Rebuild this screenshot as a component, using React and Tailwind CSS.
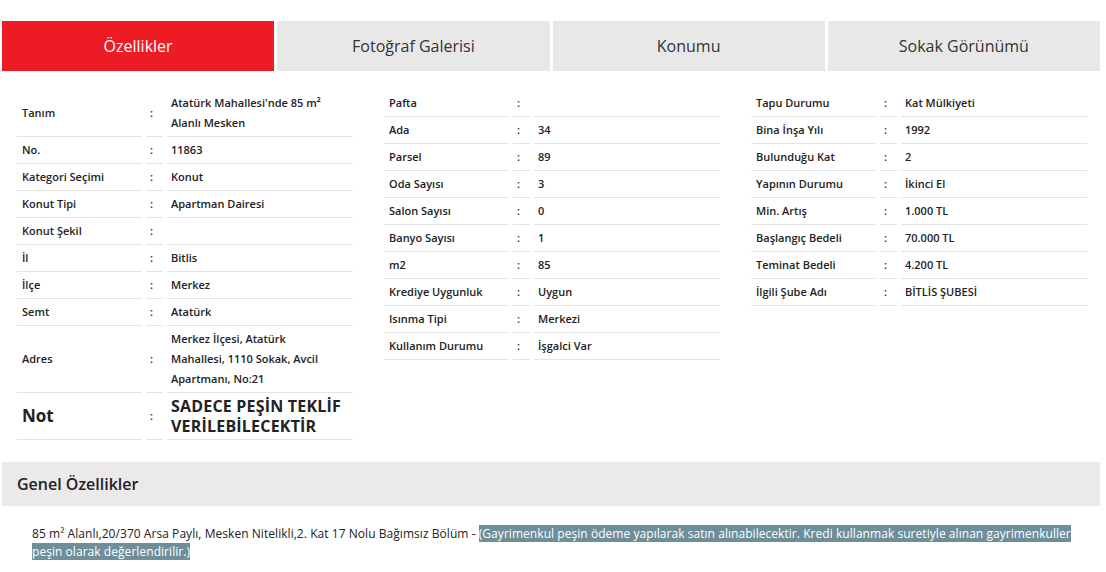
import React from "react";

const tabs = ["Özellikler", "Fotoğraf Galerisi", "Konumu", "Sokak Görünümü"];

const col1 = [
  { label: "Tanım", value: ["Atatürk Mahallesi'nde 85 m²", "Alanlı Mesken"] },
  { label: "No.", value: ["11863"] },
  { label: "Kategori Seçimi", value: ["Konut"] },
  { label: "Konut Tipi", value: ["Apartman Dairesi"] },
  { label: "Konut Şekil", value: [""] },
  { label: "İl", value: ["Bitlis"] },
  { label: "İlçe", value: ["Merkez"] },
  { label: "Semt", value: ["Atatürk"] },
  { label: "Adres", value: ["Merkez İlçesi, Atatürk", "Mahallesi, 1110 Sokak, Avcil", "Apartmanı, No:21"] },
  { label: "Not", value: ["SADECE PEŞİN TEKLİF", "VERİLEBİLECEKTİR"], big: true },
];

const col2 = [
  { label: "Pafta", value: [""] },
  { label: "Ada", value: ["34"] },
  { label: "Parsel", value: ["89"] },
  { label: "Oda Sayısı", value: ["3"] },
  { label: "Salon Sayısı", value: ["0"] },
  { label: "Banyo Sayısı", value: ["1"] },
  { label: "m2", value: ["85"] },
  { label: "Krediye Uygunluk", value: ["Uygun"] },
  { label: "Isınma Tipi", value: ["Merkezi"] },
  { label: "Kullanım Durumu", value: ["İşgalci Var"] },
];

const col3 = [
  { label: "Tapu Durumu", value: ["Kat Mülkiyeti"] },
  { label: "Bina İnşa Yılı", value: ["1992"] },
  { label: "Bulunduğu Kat", value: ["2"] },
  { label: "Yapının Durumu", value: ["İkinci El"] },
  { label: "Min. Artış", value: ["1.000 TL"] },
  { label: "Başlangıç Bedeli", value: ["70.000 TL"] },
  { label: "Teminat Bedeli", value: ["4.200 TL"] },
  { label: "İlgili Şube Adı", value: ["BİTLİS ŞUBESİ"] },
];

function InfoTable({ rows }) {
  return (
    <div className="grid grid-cols-[125px_17px_186px] gap-x-[4px] content-start">
      {rows.map((row) => (
        <React.Fragment key={row.label}>
          <div className={`flex items-center border-b border-[#e4e4e4] py-[3px] pl-[5px] ${row.big ? "text-[17px] font-bold" : ""}`}>
            {row.label}
          </div>
          <div className="flex items-center justify-center border-b border-[#e4e4e4] py-[3px] pr-[6px]">:</div>
          <div className={`flex flex-col justify-center border-b border-[#e4e4e4] py-[3px] pl-[4px] ${row.big ? "text-[16px] font-bold tracking-[0.2px]" : ""}`}>
            {row.value.map((line, i) => (
              <span key={i} className="min-h-[20px]">{line}</span>
            ))}
          </div>
        </React.Fragment>
      ))}
    </div>
  );
}

export default function App() {
  return (
    <div className="min-h-[572px] bg-white text-[#222] font-['Open_Sans',sans-serif]">
      <div className="pt-[21px] px-[2px] w-[1102px]">
        <div className="grid grid-cols-4 gap-x-[3px]">
          {tabs.map((tab, i) => (
            <div
              key={tab}
              className={`flex h-[50px] items-center justify-center text-[16px] ${i === 0 ? "bg-[#ed1c24] text-white" : "bg-[#e9e8e8] text-[#333]"}`}
            >
              {tab}
            </div>
          ))}
        </div>
      </div>

      <div className="mt-[19px] pl-[17px] grid grid-cols-[337px_337px_337px] gap-x-[30px] text-[11px] font-semibold leading-[20px]">
        <InfoTable rows={col1} />
        <InfoTable rows={col2} />
        <InfoTable rows={col3} />
      </div>

      <div className="mt-[22px] mx-[2px] w-[1098px] h-[44px] flex items-center bg-[#ebe9ea] pl-[15px] text-[16px] font-semibold">
        Genel Özellikler
      </div>

      <p className="mt-[19px] pl-[32px] w-[1092px] text-[12px] leading-[18px] tracking-[0.05px] text-[#222]">
        85 m² Alanlı,20/370 Arsa Paylı, Mesken Nitelikli,2. Kat 17 Nolu Bağımsız Bölüm -{" "}
        <span className="bg-[#6e8e9a] text-white">
          (Gayrimenkul peşin ödeme yapılarak satın alınabilecektir. Kredi kullanmak suretiyle alınan gayrimenkuller peşin olarak değerlendirilir.)
        </span>
      </p>
    </div>
  );
}
